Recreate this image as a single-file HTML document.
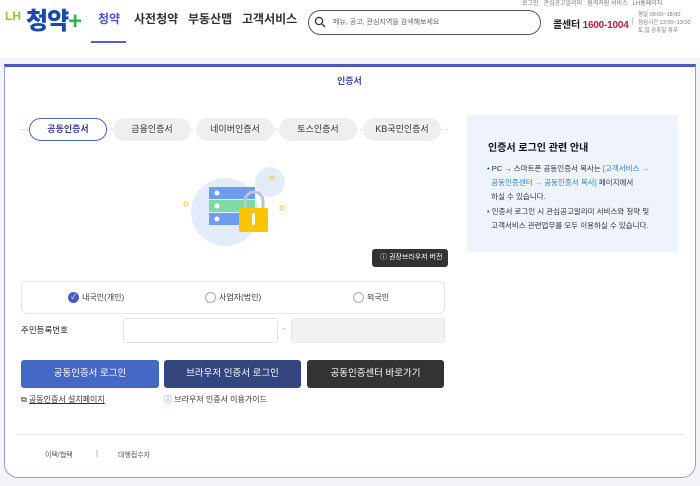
<!DOCTYPE html>
<html><head><meta charset="utf-8"><style>
*{margin:0;padding:0;box-sizing:border-box}
body{width:700px;height:486px;overflow:hidden;background:#f4f5fb;font-family:"Liberation Sans","Noto Sans CJK KR",sans-serif;position:relative;color:#222}
.a{position:absolute;white-space:nowrap}
.hdr{position:absolute;left:0;top:0;width:700px;height:58px;background:#fff}
.modal{position:absolute;left:4px;top:64px;width:692px;height:414px;background:#fff;border:1px solid #8f9ad8;border-top:3px solid #4a5bb5;border-radius:0 0 14px 14px}
.tab{position:absolute;top:118px;height:23px;width:78px;border-radius:12px;background:#efefef;font-size:9px;color:#333;text-align:center;line-height:23px}
.btn{position:absolute;top:360px;height:28px;border-radius:3px;color:#fff;font-size:9.5px;text-align:center;line-height:28px}
</style></head><body>
<div class="hdr"></div>
<div class="a" style="left:5px;top:9px;font-size:12px;font-weight:bold;color:#8cc63f">LH</div>
<div class="a" style="left:26px;top:1px;font-size:24px;font-weight:900;color:#1a4aa8;letter-spacing:-1px">청약<span style="color:#2bb24c">+</span></div>
<div class="a" style="left:98px;top:10px;font-size:12px;font-weight:bold;color:#4458c0">청약</div>
<div class="a" style="left:91px;top:41px;width:35px;height:2px;background:#5563c1"></div>
<div class="a" style="left:134px;top:10px;font-size:12px;font-weight:bold;color:#333">사전청약</div>
<div class="a" style="left:188px;top:10px;font-size:12px;font-weight:bold;color:#333">부동산맵</div>
<div class="a" style="left:242px;top:10px;font-size:12px;font-weight:bold;color:#333">고객서비스</div>
<div class="a" style="left:308px;top:10px;width:233px;height:25px;border:1px solid #555;border-radius:13px"></div>
<svg class="a" style="left:314px;top:16px" width="12" height="12" viewBox="0 0 12 12"><circle cx="5" cy="5" r="3.6" fill="none" stroke="#333" stroke-width="1.3"/><path d="M8 8l3 3" stroke="#333" stroke-width="1.3"/></svg>
<div class="a" style="left:333px;top:17px;font-size:7px;color:#666">메뉴, 공고, 관심지역을 검색해보세요</div>
<div class="a" style="left:522px;top:-2px;font-size:6px;color:#777">로그인 &nbsp; 관심공고알리미 &nbsp; 원격지원 서비스 &nbsp; LH홈페이지</div>
<div class="a" style="left:553px;top:16px;font-size:10px;font-weight:bold;color:#222;letter-spacing:-0.2px">콜센터 <span style="color:#b0223a">1600-1004</span></div>
<div class="a" style="left:632px;top:17px;width:1px;height:8px;background:#ccc"></div>
<div class="a" style="left:638px;top:11px;font-size:5.5px;color:#777;line-height:8px">평일 09:00~18:00<br>점심시간 12:00~13:00<br>토,일 공휴일 휴무</div>

<div class="modal"></div>
<div class="a" style="left:337px;top:74px;font-size:9px;color:#3b4a9c;font-weight:bold">인증서</div>

<div class="a" style="left:20px;top:129px;width:428px;border-top:1px dashed #ddd"></div>
<div class="tab" style="left:29px;background:#fff;border:1px solid #5563c1;color:#333f8c;font-weight:bold;line-height:21px">공동인증서</div>
<div class="tab" style="left:113px">금융인증서</div>
<div class="tab" style="left:196px">네이버인증서</div>
<div class="tab" style="left:279px">토스인증서</div>
<div class="tab" style="left:363px">KB국민인증서</div>

<svg class="a" style="left:180px;top:163px" width="110" height="85" viewBox="180 163 110 85">
<circle cx="225" cy="212" r="34" fill="#e3ecfa"/><circle cx="270" cy="182" r="15" fill="#e3ecfa"/>
<circle cx="186" cy="204" r="2" fill="none" stroke="#f5c842"/><circle cx="282" cy="208" r="2" fill="none" stroke="#f5c842"/><circle cx="272" cy="178" r="2" fill="none" stroke="#f5c842"/>
<rect x="209" y="187" width="46" height="12" fill="#6f9cf0"/><rect x="209" y="200" width="46" height="12" fill="#7fd9a2"/><rect x="209" y="213" width="46" height="12" fill="#6f9cf0"/>
<circle cx="217" cy="193" r="2.5" fill="#fff"/><circle cx="217" cy="206" r="2.5" fill="#fff"/><circle cx="217" cy="219" r="2.5" fill="#fff"/>
<path d="M245 208v-7a9 9 0 0 1 18 0v7" fill="none" stroke="#b9c6d8" stroke-width="3"/>
<rect x="239" y="208" width="29" height="24" rx="2" fill="#f8c600"/><rect x="252" y="213" width="3" height="12" rx="1.5" fill="#fff"/>
</svg>

<div class="a" style="left:372px;top:249px;width:76px;height:18px;background:#333;border-radius:3px;color:#fff;font-size:7px;line-height:18px;padding-left:8px">ⓘ 권장브라우저 버전</div>

<div class="a" style="left:21px;top:281px;width:424px;height:33px;border:1px solid #e5e5ea;border-radius:6px"></div>
<div class="a" style="left:68px;top:292px;width:11px;height:11px;border-radius:50%;background:#4a5bc0;color:#fff;font-size:7px;text-align:center;line-height:11px">✓</div>
<div class="a" style="left:82px;top:292px;font-size:8px;color:#333">내국인(개인)</div>
<div class="a" style="left:205px;top:292px;width:11px;height:11px;border-radius:50%;border:1px solid #aaa"></div>
<div class="a" style="left:219px;top:292px;font-size:8px;color:#333">사업자(법인)</div>
<div class="a" style="left:353px;top:292px;width:11px;height:11px;border-radius:50%;border:1px solid #aaa"></div>
<div class="a" style="left:367px;top:292px;font-size:8px;color:#333">외국인</div>

<div class="a" style="left:21px;top:324px;font-size:8.5px;color:#222">주민등록번호</div>
<div class="a" style="left:123px;top:318px;width:155px;height:25px;border:1px solid #e3e3e3;border-radius:3px"></div>
<div class="a" style="left:283px;top:324px;font-size:8px;color:#888">-</div>
<div class="a" style="left:291px;top:318px;width:154px;height:25px;background:#f2f2f2;border:1px solid #e8e8e8;border-radius:3px"></div>

<div class="btn" style="left:21px;width:138px;background:#4468c4">공동인증서 로그인</div>
<div class="btn" style="left:164px;width:137px;background:#34467e">브라우저 인증서 로그인</div>
<div class="btn" style="left:307px;width:137px;background:#333">공동인증센터 바로가기</div>

<div class="a" style="left:21px;top:394px;font-size:8px;color:#333">⧉ <span style="text-decoration:underline">공동인증서 설치페이지</span></div>
<div class="a" style="left:164px;top:394px;font-size:8px;color:#333"><span style="color:#4468c4">ⓘ</span> 브라우저 인증서 이용가이드</div>

<div class="a" style="left:16px;top:434px;width:668px;height:1px;background:#e6e6e6"></div>
<div class="a" style="left:45px;top:450px;font-size:7px;color:#555">이택/협택</div>
<div class="a" style="left:96px;top:449px;font-size:8px;color:#999">|</div>
<div class="a" style="left:118px;top:450px;font-size:7px;color:#555">대행접수자</div>

<div class="a" style="left:467px;top:115px;width:211px;height:137px;background:#eef3fc"></div>
<div class="a" style="left:488px;top:139px;font-size:10px;font-weight:bold;color:#111">인증서 로그인 관련 안내</div>
<div class="a" style="left:487px;top:162px;font-size:7.5px;color:#333;line-height:14px;white-space:normal;width:188px"><span style="color:#1a4aa8">•</span> PC → 스마트폰 공동인증서 복사는 <span style="color:#2f7fd6">[고객서비스 →<br>&nbsp; 공동인증센터 → 공동인증서 복사]</span> 페이지에서<br>&nbsp; 하실 수 있습니다.</div>
<div class="a" style="left:487px;top:205px;font-size:7.5px;color:#333;line-height:14px"><span style="color:#1a4aa8">•</span> 인증서 로그인 시 관심공고알리미 서비스와 청약 및<br>&nbsp; 고객서비스 관련업무를 모두 이용하실 수 있습니다.</div>
</body></html>
